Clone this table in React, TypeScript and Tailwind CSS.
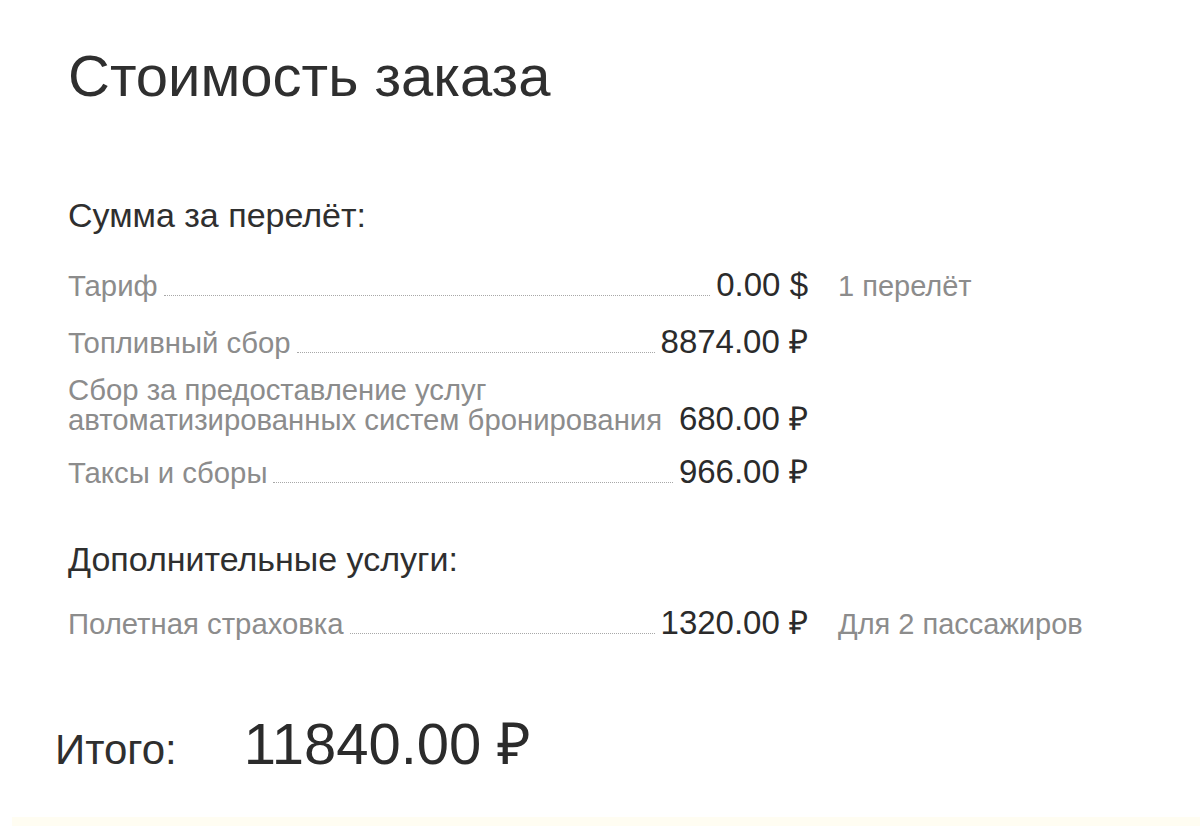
import React from "react";

type Row = {
  label: React.ReactNode;
  amount: string;
  note?: string;
  leader?: boolean;
  className: string;
};

const flightRows: Row[] = [
  { label: "Тариф", amount: "0.00 $", note: "1 перелёт", leader: true, className: "mt-[36px]" },
  { label: "Топливный сбор", amount: "8874.00 ₽", leader: true, className: "mt-[24px]" },
  {
    label: (
      <>
        Сбор за предоставление услуг
        <br />
        автоматизированных систем бронирования
      </>
    ),
    amount: "680.00 ₽",
    leader: false,
    className: "mt-[17px]",
  },
  { label: "Таксы и сборы", amount: "966.00 ₽", leader: true, className: "mt-[20px]" },
];

const extraRows: Row[] = [
  { label: "Полетная страховка", amount: "1320.00 ₽", note: "Для 2 пассажиров", leader: true, className: "mt-[30px]" },
];

function PriceRow({ row }: { row: Row }) {
  return (
    <div className={`flex [align-items:last_baseline] ${row.className}`}>
      <div className="flex w-[740px] [align-items:last_baseline]">
        <span className="text-[29.3px] leading-[30px] text-[#8c8c8c]">{row.label}</span>
        {row.leader ? (
          <div className="mx-[6px] h-0 flex-1 border-b border-dotted border-[#a8a8a8]" />
        ) : (
          <div className="flex-1" />
        )}
        <span className="text-[33px] leading-none text-[#2b2b2b]">{row.amount}</span>
      </div>
      {row.note && (
        <span className="ml-[30px] text-[29px] leading-none text-[#8c8c8c]">{row.note}</span>
      )}
    </div>
  );
}

export default function App() {
  return (
    <div className="flex min-h-[826px] flex-col bg-white font-['Liberation_Sans',Arial,sans-serif]">
      <div className="pl-[68px] pt-[47px]">
        <h1 className="text-[58px] leading-none font-normal text-[#2f2f2f]">Стоимость заказа</h1>

        <h2 className="mt-[93px] text-[34px] leading-none text-[#2f2f2f]">Сумма за перелёт:</h2>
        {flightRows.map((row, i) => (
          <PriceRow key={i} row={row} />
        ))}

        <h2 className="mt-[54px] text-[34px] leading-none text-[#2f2f2f]">Дополнительные услуги:</h2>
        {extraRows.map((row, i) => (
          <PriceRow key={i} row={row} />
        ))}
      </div>

      {/* Total */}
      <div className="mt-[76px] flex items-baseline pl-[55px]">
        <span className="text-[42px] leading-none text-[#2f2f2f]">Итого:</span>
        <span className="ml-[67px] text-[58px] leading-none text-[#2b2b2b]">11840.00 ₽</span>
      </div>

      <div className="mt-auto ml-[12px] h-[9px] bg-[#fffdf2]" />
    </div>
  );
}
